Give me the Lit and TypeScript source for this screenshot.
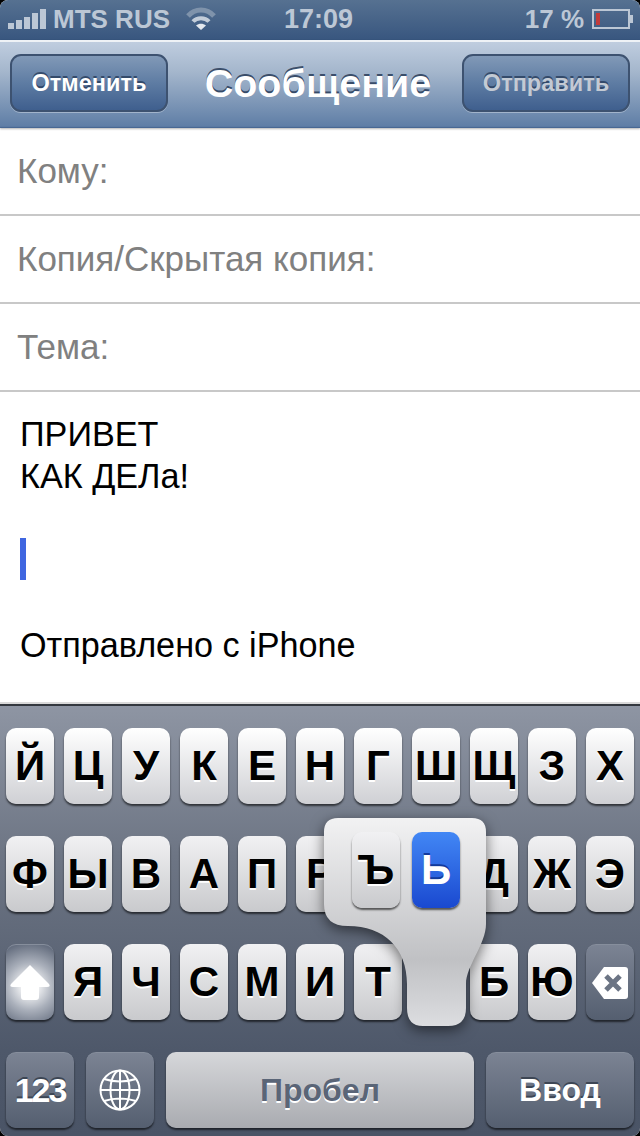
import { LitElement, html, css, svg } from "lit";
import { customElement } from "lit/decorators.js";

// the keys under the accent popup stay blank, nothing of them shows
const ROW1 = ["Й", "Ц", "У", "К", "Е", "Н", "Г", "Ш", "Щ", "З", "Х"];
const ROW2 = ["Ф", "Ы", "В", "А", "П", "Р", "", "", "Д", "Ж", "Э"];
const ROW3 = ["Я", "Ч", "С", "М", "И", "Т", "", "Б", "Ю"];
const BARS = [
  [0, 14, 6],
  [8, 11, 9],
  [16, 8, 12],
  [24, 4, 16],
  [32, 0, 20],
];
const FIELDS = ["Кому:", "Копия/Скрытая копия:", "Тема:"];

@customElement("app-root")
export class AppRoot extends LitElement {
  static override styles = css`
    :host {
      display: block;
      width: 640px;
      height: 1136px;
      background: #000;
      font-family: "Liberation Sans", Arial, sans-serif;
    }

    .screen {
      width: 640px;
      height: 1136px;
      display: flex;
      flex-direction: column;
      border-radius: 8px;
      overflow: hidden;
      background: #fff;
    }

    /* status bar */
    .status {
      height: 40px;
      flex-shrink: 0;
      display: flex;
      align-items: center;
      padding: 0 6px 2px 8px;
      box-sizing: border-box;
      background: linear-gradient(#567191, #38567f);
      color: #bcc7d5;
      font-weight: bold;
      font-size: 26px;
    }

    .signal {
      margin-right: 7px;
    }

    .carrier {
      font-size: 26px;
    }

    .wifi {
      margin-left: 15px;
    }

    .clock {
      margin-left: 67px;
      width: 146px;
      font-size: 27px;
    }

    .pct {
      margin-left: auto;
      margin-right: 8px;
    }

    /* navigation bar */
    .nav {
      height: 88px;
      flex-shrink: 0;
      box-sizing: border-box;
      border-top: 2px solid #eef2f6;
      display: flex;
      align-items: center;
      padding: 0 10px 4px;
      background: linear-gradient(#bfcddf, #a4b6cc 35%, #5f7ea6 98%, #3f5f8c);
      box-shadow: 0 1px 2px rgba(0, 0, 0, 0.3);
      position: relative;
    }

    .btn {
      height: 58px;
      box-sizing: border-box;
      display: flex;
      align-items: center;
      justify-content: center;
      border: 2px solid #3d5270;
      border-radius: 11px;
      background: linear-gradient(#8199b7, #5e7ca3 50%, #3f5f8e);
      box-shadow: 0 1px 0 rgba(255, 255, 255, 0.35);
      color: #fff;
      font-weight: bold;
      font-size: 23.5px;
      text-shadow: 0 -2px 0 rgba(30, 50, 80, 0.7);
    }

    .btn.cancel {
      width: 158px;
    }

    .btn.send {
      width: 168px;
      color: #c3cad4;
    }

    .title {
      flex: 1;
      padding-left: 6px;
      text-align: center;
      color: #fff;
      font-weight: bold;
      font-size: 39.5px;
      text-shadow: 0 -2px 0 rgba(30, 50, 80, 0.8);
    }

    /* mail form */
    .field {
      height: 88px;
      flex-shrink: 0;
      box-sizing: border-box;
      display: flex;
      align-items: center;
      padding-left: 17px;
      border-bottom: 2px solid #c8c8c8;
      color: #808080;
      font-size: 35px;
    }

    .body {
      flex: 1;
      padding: 21px 20px 0;
      font-size: 34.2px;
      line-height: 42px;
      color: #000;
      box-sizing: border-box;
      border-bottom: 2px solid #d9d9d9;
    }

    .line {
      height: 42px;
    }

    .caret {
      width: 6px;
      height: 42px;
      background: #3f66e0;
      margin-top: 41px;
    }

    .sig {
      margin-top: 44px;
    }

    /* keyboard */
    .kb {
      height: 432px;
      flex-shrink: 0;
      box-sizing: border-box;
      border-top: 2px solid #33383f;
      padding: 22px 6px 0;
      display: flex;
      flex-direction: column;
      gap: 32px;
      position: relative;
      background: linear-gradient(#8e95a3, #6d7584 35%, #4e586a 80%, #4a5466);
    }

    .row {
      display: flex;
      gap: 10px;
      height: 76px;
    }

    .row.bottom {
      gap: 12px;
    }

    .key {
      width: 48px;
      height: 76px;
      flex-shrink: 0;
      box-sizing: border-box;
      border-radius: 10px;
      display: flex;
      align-items: center;
      justify-content: center;
      background: linear-gradient(#f1f1f3, #c9cacd);
      box-shadow: 0 2px 2px rgba(0, 0, 0, 0.6);
      color: #000;
      font-weight: bold;
      font-size: 42px;
      text-shadow: 0 2px 0 #fff;
    }

    .key.top {
      background: linear-gradient(#fff, #cfd0d4);
    }

    .key.dark {
      background: linear-gradient(#7b8393, #555f70);
      border-top: 1px solid #868e9c;
      color: #fff;
      text-shadow: 0 -2px 0 #3d4654;
    }

    .key.shift {
      background: radial-gradient(circle at 50% 55%, #fff 10%, #aab0bb 50%, #666f80 90%);
    }

    .key.wide {
      width: 68px;
    }

    .key.num {
      font-size: 34px;
      letter-spacing: -2px;
    }

    .key.space {
      width: 308px;
      background: linear-gradient(#d6d7da, #a9abb0);
      color: #5a6577;
      font-size: 32px;
    }

    .key.enter {
      width: 148px;
      font-size: 32px;
    }

    /* accent popup */
    .popup {
      position: absolute;
      left: 324px;
      top: 112px;
      width: 162px;
      height: 208px;
    }

    .popup svg {
      position: absolute;
      left: 0;
      top: 0;
      filter: drop-shadow(0 4px 7px rgba(0, 0, 0, 0.55));
    }

    .choices {
      position: absolute;
      left: 28px;
      top: 14px;
      display: flex;
      gap: 12px;
    }

    .key.on {
      background: linear-gradient(#4287f5, #1a49d0);
      color: #fff;
      text-shadow: 0 -2px 0 #123a9c;
    }
  `;

  private key(label: string, top = false) {
    return html`<div class="key ${top ? "top" : ""}">${label}</div>`;
  }

  private signal() {
    return html`<svg class="signal" width="38" height="20" viewBox="0 0 38 20">
      ${BARS.map(
        ([x, y, h]) => svg`<rect x=${x} y=${y} width="6" height=${h} fill="#bcc7d5"></rect>`
      )}
    </svg>`;
  }

  private wifi() {
    return html`<svg class="wifi" width="32" height="24" viewBox="0 0 32 24" fill="none">
      <path d="M3 9 C10 1 22 1 29 9" stroke="#7f93ab" stroke-width="5"></path>
      <path d="M8 14.5 C12 10 20 10 24 14.5" stroke="#c3cdd9" stroke-width="4"></path>
      <path d="M16 23 L11 18.5 C14 16 18 16 21 18.5 Z" fill="#e4e9ef"></path>
    </svg>`;
  }

  private battery() {
    return html`<svg width="42" height="20" viewBox="0 0 42 20">
      <rect x="1" y="1" width="36" height="18" fill="none" stroke="#bcc7d5" stroke-width="2"></rect>
      <rect x="4" y="4" width="4" height="12" fill="#c23b3b"></rect>
      <rect x="38" y="6" width="3" height="8" fill="#bcc7d5"></rect>
    </svg>`;
  }

  private popupShape() {
    return html`<svg width="162" height="208" viewBox="0 0 162 208">
      <defs>
        <linearGradient id="pop" x1="0" y1="0" x2="0" y2="1">
          <stop offset="0" stop-color="#f2f2f3"></stop>
          <stop offset="0.68" stop-color="#c0c1c4"></stop>
          <stop offset="1" stop-color="#dcdde0"></stop>
        </linearGradient>
      </defs>
      <path
        d="M14 0 H148 Q162 0 162 14 V106 C162 126 142 148 142 166 V190 Q142 208 124 208 H99 Q83 208 83 190 V166 C83 130 60 108 24 108 Q0 108 0 86 V14 Q0 0 14 0 Z"
        fill="url(#pop)"
      ></path>
    </svg>`;
  }

  override render() {
    return html`
      <div class="screen">
        <div class="status">
          ${this.signal()}
          <span class="carrier">MTS RUS</span>
          ${this.wifi()}
          <span class="clock">17:09</span>
          <span class="pct">17 %</span>
          ${this.battery()}
        </div>
        <div class="nav">
          <div class="btn cancel">Отменить</div>
          <div class="title">Сообщение</div>
          <div class="btn send">Отправить</div>
        </div>
        ${FIELDS.map((f) => html`<div class="field">${f}</div>`)}
        <div class="body">
          <div class="line">ПРИВЕТ</div>
          <div class="line">КАК ДЕЛа!</div>
          <div class="caret"></div>
          <div class="line sig">Отправлено с iPhone</div>
        </div>
        <div class="kb">
          <div class="row">${ROW1.map((k) => this.key(k, true))}</div>
          <div class="row">${ROW2.map((k) => this.key(k))}</div>
          <div class="row">
            <div class="key dark shift">
              <svg width="42" height="38" viewBox="0 0 42 38">
                <path
                  d="M21 1 L40 20 Q42 23 38 23 H30 V33 Q30 36 27 36 H15 Q12 36 12 33 V23 H4 Q0 23 2 20 Z"
                  fill="#fff"
                ></path>
              </svg>
            </div>
            ${ROW3.map((k) => this.key(k))}
            <div class="key dark">
              <svg width="38" height="34" viewBox="0 0 38 34">
                <path
                  d="M13 1 H34 Q37 1 37 4 V30 Q37 33 34 33 H13 L1 17 Z"
                  fill="#fff"
                ></path>
                <path
                  d="M15 10 L29 24 M29 10 L15 24"
                  stroke="#6b7484"
                  stroke-width="5"
                ></path>
              </svg>
            </div>
          </div>
          <div class="row bottom">
            <div class="key dark wide num">123</div>
            <div class="key dark wide">
              <svg width="44" height="44" viewBox="0 0 44 44" fill="none" stroke="#fff" stroke-width="2">
                <circle cx="22" cy="21" r="19.5"></circle>
                <ellipse cx="22" cy="21" rx="9.5" ry="19.5"></ellipse>
                <path d="M22 2 V41 M2.5 21 H41.5 M6 10 Q22 15 38 10 M6 32 Q22 27 38 32"></path>
              </svg>
            </div>
            <div class="key space">Пробел</div>
            <div class="key dark enter">Ввод</div>
          </div>
          <div class="popup">
            ${this.popupShape()}
            <div class="choices">
              <div class="key">Ъ</div>
              <div class="key on">Ь</div>
            </div>
          </div>
        </div>
      </div>
    `;
  }
}

declare global {
  interface HTMLElementTagNameMap {
    "app-root": AppRoot;
  }
}
